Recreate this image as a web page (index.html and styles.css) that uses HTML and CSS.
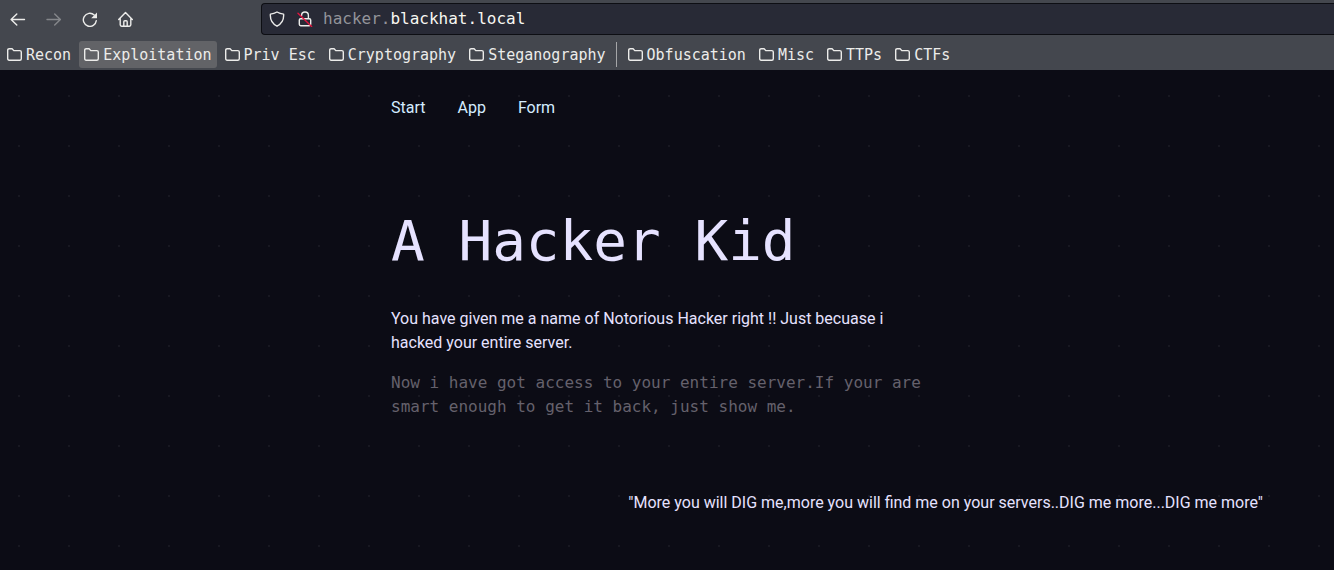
FILE: index.html
```html
<!DOCTYPE html>
<html lang="en">
<head>
<meta charset="utf-8">
<title>A Hacker Kid</title>
<link rel="stylesheet" href="styles.css">
</head>
<body>
<svg class="defs" aria-hidden="true">
  <symbol id="folder" viewBox="0 0 15 13">
    <path d="M.7 10.6V2.2Q.7.7 2.2.7H5.1L6.8 2.6H12.8Q14.3 2.6 14.3 4.1V10.8Q14.3 12.3 12.8 12.3H2.2Q.7 12.3.7 10.6Z"/>
  </symbol>
</svg>
<header class="browser">
  <div class="toolbar">
    <div class="controls">
      <button class="tool" aria-label="Back"><svg viewBox="0 0 16 16"><path d="M14.5 8.5H1.3M6.8 2.9 1.1 8.5l5.7 5.6"/></svg></button>
      <button class="tool" aria-label="Forward" disabled><svg viewBox="0 0 16 16"><path d="M1 8.5h13.2M8.7 2.9 14.4 8.5l-5.7 5.6"/></svg></button>
      <button class="tool" aria-label="Reload"><svg viewBox="0 0 16 16"><path d="M14.3 9.6A6.5 6.5 0 1 1 12.2 4"/><path class="solid" d="M15 1.4v5.8H9.2Z"/></svg></button>
      <button class="tool" aria-label="Home"><svg viewBox="0 0 16 16"><path d="M.7 8.4 7.5 1.5 14.3 8.4M2.2 7v6.8q0 1.4 1.4 1.4h7.8q1.4 0 1.4-1.4V7M5.8 15v-4.2q0-1 1-1h1.4q1 0 1 1V15"/></svg></button>
    </div>
    <div class="address">
      <svg class="glyph" viewBox="0 0 16 16" aria-hidden="true"><path d="M8 1Q11 2.8 14.6 3.1Q15.3 11.3 8 15.2Q.7 11.3 1.4 3.1Q5 2.8 8 1Z"/></svg>
      <svg class="glyph" viewBox="0 0 16 16" aria-hidden="true"><path d="M4.6 4.4q0-3.4 3.4-3.4t3.4 3.4v3.3M3.7 7.7h8.6q1.4 0 1.4 1.4v4.2q0 1.4-1.4 1.4H3.7q-1.4 0-1.4-1.4V9.1q0-1.4 1.4-1.4Z"/><path class="slash" d="M1 2.2 14.6 15.4"/></svg>
      <a class="url" href="#">hacker.<span class="domain">blackhat.local</span></a>
    </div>
  </div>
  <nav class="bookmarks" aria-label="Bookmarks">
    <button class="bookmark"><svg><use href="#folder"/></svg>Recon</button>
    <button class="bookmark active"><svg><use href="#folder"/></svg>Exploitation</button>
    <button class="bookmark"><svg><use href="#folder"/></svg>Priv Esc</button>
    <button class="bookmark"><svg><use href="#folder"/></svg>Cryptography</button>
    <button class="bookmark"><svg><use href="#folder"/></svg>Steganography</button>
    <span class="separator"></span>
    <button class="bookmark"><svg><use href="#folder"/></svg>Obfuscation</button>
    <button class="bookmark"><svg><use href="#folder"/></svg>Misc</button>
    <button class="bookmark"><svg><use href="#folder"/></svg>TTPs</button>
    <button class="bookmark"><svg><use href="#folder"/></svg>CTFs</button>
  </nav>
</header>
<div class="page">
  <div class="container">
    <nav class="menu">
      <a href="#">Start</a>
      <a href="#">App</a>
      <a href="#">Form</a>
    </nav>
    <main>
      <h1>A Hacker Kid</h1>
      <p class="intro">You have given me a name of Notorious Hacker right !! Just becuase i hacked your entire server.</p>
      <p class="muted">Now i have got access to your entire server.If your are smart enough to get it back, just show me.</p>
    </main>
  </div>
  <p class="quote">"More you will DIG me,more you will find me on your servers..DIG me more...DIG me more"</p>
</div>
</body>
</html>
```

FILE: styles.css
```css
* { box-sizing: border-box; }

body {
  margin: 0;
  min-height: 100vh;
  display: flex;
  flex-direction: column;
  background: #0c0c15;
  color: #e6e2ff;
  font: 16px/24px Roboto, sans-serif;
}

h1, p { margin: 0; }

a { color: inherit; text-decoration: none; }

button {
  border: 0;
  background: none;
  color: inherit;
  font: inherit;
}

.defs { position: absolute; width: 0; height: 0; }

.browser {
  background: #44474e;
  color: #ececea;
  font-family: "DejaVu Sans Mono", monospace;
}

.browser svg {
  flex: none;
  fill: none;
  stroke: currentColor;
  stroke-width: 1.4;
  stroke-linecap: round;
  stroke-linejoin: round;
}

.toolbar {
  display: flex;
  padding-top: 3px;
}

.controls {
  flex: none;
  display: flex;
  align-items: center;
  width: 261px;
}

.tool {
  width: 36px;
  height: 32px;
  padding: 0 10px;
}

.tool svg { display: block; width: 16px; height: 16px; }
.tool:disabled { color: #85878b; }
.browser .solid { fill: currentColor; stroke-width: 0; }
.browser .slash { stroke: #e2143f; }

.address {
  flex: 1;
  display: flex;
  align-items: center;
  gap: 12px;
  height: 32px;
  padding-left: 7px;
  border: 1px solid #0d0e13;
  border-right: 0;
  border-radius: 4px 0 0 4px;
  background: #282a36;
}

.glyph { width: 16px; height: 16px; }
.url { margin-left: -2px; color: #93949a; }
.domain { color: #f8f8f2; }

.bookmarks {
  display: flex;
  align-items: center;
  gap: 3px;
  padding: 6px 2px 2px;
}

.bookmark {
  display: flex;
  align-items: center;
  gap: 4px;
  height: 27px;
  padding: 0 5px;
  border-radius: 3px;
  font-size: 15px;
  white-space: nowrap;
}

.bookmark svg { width: 15px; height: 13px; }
.bookmark.active { background: #626367; }

.separator {
  width: 1px;
  height: 25px;
  margin: 0 3px 0 2px;
  background: #a5a6a8;
}

.page {
  flex: 1;
  background-image: conic-gradient(from 90deg at 48px 48px, #181821 90deg, transparent 0);
  background-position: 20px 27px;
  background-size: 50px 50px;
}

.container {
  max-width: 600px;
  margin: 0 auto;
  padding: 0 24px;
}

.menu {
  display: flex;
  gap: 32px;
  padding: 26px 0 79px;
  color: #d4ecff;
}

h1 {
  font: 56px/84px "DejaVu Sans Mono", monospace;
  margin-bottom: 24px;
}

.intro { margin-bottom: 16px; max-width: 500px; }

.muted {
  color: #65616c;
  font-family: "DejaVu Sans Mono", monospace;
}

.quote {
  padding: 72px 71px 24px 24px;
  text-align: right;
}
```
